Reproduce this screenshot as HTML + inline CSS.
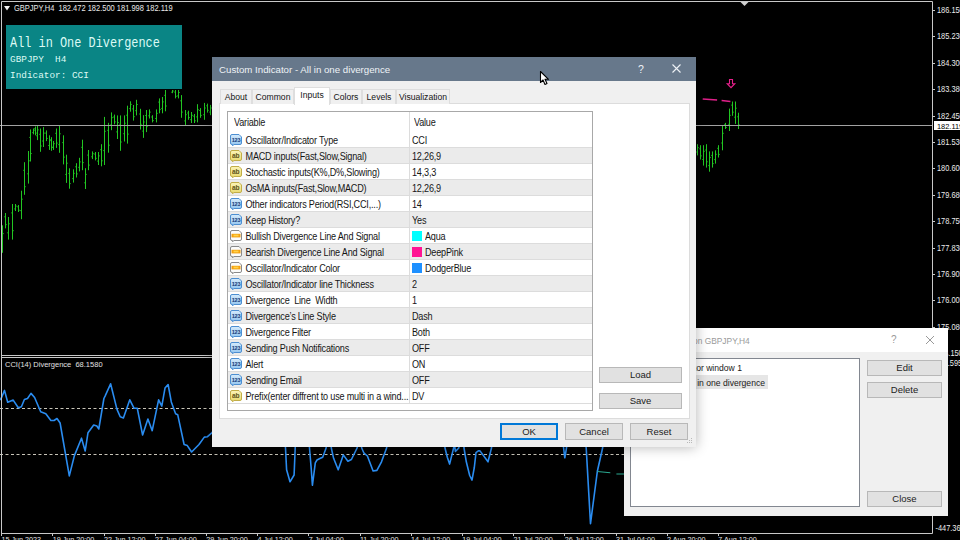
<!DOCTYPE html>
<html><head><meta charset="utf-8">
<style>
*{margin:0;padding:0;box-sizing:border-box}
html,body{width:960px;height:540px;overflow:hidden;background:#000;font-family:"Liberation Sans",sans-serif}
.abs{position:absolute}
.al{position:absolute;left:937px;font-size:7.4px;color:#ececec;white-space:nowrap;line-height:11px;transform:scaleY(1.12)}
.tk{position:absolute;left:932px;width:3px;height:1px;background:#c8c8c8}
.bt{position:absolute;top:533px;width:1px;height:3px;background:#c8c8c8}
.bl{position:absolute;top:534px;font-size:7.2px;color:#e6e6e6;white-space:nowrap;line-height:11px}
#teal{position:absolute;left:6px;top:25px;width:176px;height:64px;background:#0a8585}
.mono{font-family:"Liberation Mono",monospace;color:#dcfaf4;white-space:pre;position:absolute;left:4px;transform-origin:0 0}
#dlg{position:absolute;left:212px;top:57px;width:484px;height:390px;background:#f0f0f0;box-shadow:0 0 12px rgba(0,0,0,0.3)}
#tb{position:absolute;left:0;top:0;width:484px;height:24px;background:#67788b}
#tbt{position:absolute;left:7px;top:6.5px;font-size:9.7px;color:#eef2f6;white-space:nowrap;line-height:12px}
.tab{position:absolute;top:32px;height:15px;border:1px solid #dedede;border-bottom:none;background:#f0f0f0;font-size:8.6px;color:#161616;line-height:14px;text-align:center;white-space:nowrap}
.tab span{display:inline-block;transform:scaleY(1.12)}
#panel{position:absolute;left:7px;top:46px;width:471px;height:316px;background:#fff;border:1px solid #dcdcdc}
#lv{position:absolute;left:15px;top:54px;width:366px;height:300px;background:#fff;border:1px solid #a8a8a8;overflow:hidden}
.row{position:absolute;left:0;width:364px;height:16px;border-top:1px solid #dcdcdc}
.ic{position:absolute;left:1px;top:1px;width:14px;height:13px}
.ic svg{display:block}
.vn{position:absolute;left:17.5px;top:2.8px;font-size:9.1px;letter-spacing:-0.2px;color:#161616;white-space:nowrap;line-height:13px;transform:scaleY(1.12)}
.vv{position:absolute;left:184px;top:2.8px;font-size:9.1px;letter-spacing:-0.2px;color:#161616;white-space:nowrap;line-height:13px;transform:scaleY(1.12)}
.sw{position:absolute;left:184px;top:3px;width:10px;height:10px}
#hdr{position:absolute;left:0;top:0;width:364px;height:20px}
#coldiv{position:absolute;left:181px;top:0;width:1px;height:291px;background:#dcdcdc}
.btn{position:absolute;background:#e1e1e1;border:1px solid #b8b8b8;font-size:9.5px;color:#222;text-align:center;white-space:nowrap}
#dlg2{position:absolute;left:624px;top:328px;width:324px;height:188px;background:#f0f0f0}
#tb2{position:absolute;left:0;top:0;width:324px;height:24px;background:#fff}
</style></head><body>
<svg width="960" height="540" style="position:absolute;left:0;top:0">
<path d="M2.5 225.3V252.8M1.3 244.6H2.5M2.5 233.6H3.7M5.5 213.0V228.4M4.3 216.8H5.5M5.5 224.6H6.7M8.5 217.0V239.6M7.3 232.8H8.5M8.5 223.8H9.7M12.5 204.0V239.6M11.3 212.9H12.5M12.5 230.7H13.7M15.5 204.0V211.0M14.3 208.9H15.5M15.5 206.1H16.7M18.5 205.0V212.0M17.3 206.8H18.5M18.5 210.2H19.7M21.5 190.7V219.2M20.3 210.6H21.5M21.5 199.2H22.7M24.5 162.2V194.8M23.3 170.3H24.5M24.5 186.7H25.7M28.5 151.0V183.6M27.3 173.8H28.5M28.5 160.8H29.7M30.5 129.4V161.5M29.3 137.4H30.5M30.5 153.5H31.7M33.5 128.5V134.3M32.3 132.6H33.5M33.5 130.2H34.7M35.5 126.5V135.3M34.3 128.7H35.5M35.5 133.1H36.7M37.5 125.6V140.1M36.3 135.8H37.5M37.5 129.9H38.7M40.5 128.5V151.8M39.3 134.3H40.5M40.5 146.0H41.7M43.5 127.1V147.0M42.3 141.0H43.5M43.5 133.1H44.7M46.5 130.4V141.1M45.3 133.1H46.5M46.5 138.4H47.7M49.5 135.3V149.9M48.3 145.5H49.5M49.5 139.7H50.7M51.5 137.2V150.8M50.3 140.6H51.5M51.5 147.4H52.7M53.5 141.0V149.9M52.3 147.2H53.5M53.5 143.7H54.7M56.5 128.5V147.9M55.3 133.3H56.5M56.5 143.1H57.7M59.5 125.6V152.8M58.3 144.6H59.5M59.5 133.8H60.7M63.5 135.3V164.4M62.3 142.6H63.5M63.5 157.1H64.7M66.5 154.7V182.9M65.3 174.4H66.5M66.5 163.2H67.7M69.5 168.3V188.7M68.3 173.4H69.5M69.5 183.6H70.7M73.5 169.3V182.6M72.3 178.6H73.5M73.5 173.3H74.7M76.5 163.2V177.5M75.3 166.8H76.5M76.5 173.9H77.7M79.5 157.8V171.4M78.3 167.3H79.5M79.5 161.9H80.7M82.5 139.7V170.2M81.3 147.3H82.5M82.5 162.6H83.7M85.5 168.2V189.0M84.3 182.8H85.5M85.5 174.4H86.7M88.5 150.0V170.2M87.3 155.1H88.5M88.5 165.1H89.7M92.5 151.4V159.1M91.3 156.8H92.5M92.5 153.7H93.7M95.5 152.0V160.4M94.3 154.1H95.5M95.5 158.3H96.7M98.5 152.0V165.0M97.3 161.1H98.5M98.5 155.9H99.7M101.5 144.2V166.3M100.3 149.7H101.5M101.5 160.8H102.7M104.5 116.9V165.0M103.3 150.6H104.5M104.5 131.3H105.7M108.5 122.8V152.7M107.3 130.3H108.5M108.5 145.2H109.7M111.5 112.4V130.2M110.3 124.9H111.5M111.5 117.7H112.7M114.5 114.6V124.3M113.3 117.0H114.5M114.5 121.9H115.7M117.5 115.4V139.0M116.3 131.9H117.5M117.5 122.5H118.7M120.5 115.4V150.8M119.3 124.2H120.5M120.5 142.0H121.7M124.5 115.4V141.5M123.3 133.7H124.5M124.5 123.2H125.7M127.5 105.7V143.6M126.3 115.2H127.5M127.5 134.1H128.7M130.5 101.3V111.7M129.3 108.6H130.5M130.5 104.4H131.7M133.5 105.0V120.6M132.3 108.9H133.5M133.5 116.7H134.7M136.5 99.8V115.4M135.3 110.7H136.5M136.5 104.5H137.7M140.5 108.8V129.5M139.3 114.0H140.5M140.5 124.3H141.7M143.5 115.2V137.9M142.3 131.1H143.5M143.5 122.0H144.7M146.5 110.0V132.1M145.3 115.5H146.5M146.5 126.6H147.7M149.5 109.4V118.5M148.3 115.8H149.5M149.5 112.1H150.7M152.5 115.2V122.4M151.3 117.0H152.5M152.5 120.6H153.7M156.5 109.4V122.4M155.3 118.5H156.5M156.5 113.3H157.7M159.5 98.4V113.3M158.3 102.1H159.5M159.5 109.6H160.7M162.5 97.0V113.3M161.3 108.4H162.5M162.5 101.9H163.7M165.5 90.0V111.3M164.3 95.3H165.5M165.5 106.0H166.7M172.5 90.0V93.2M171.3 92.2H172.5M172.5 91.0H173.7M175.5 90.0V98.4M174.3 92.1H175.5M175.5 96.3H176.7M178.5 90.0V98.4M177.3 95.9H178.5M178.5 92.5H179.7M181.5 95.1V117.8M180.3 100.8H181.5M181.5 112.1H182.7M185.5 110.0V125.6M184.3 120.9H185.5M185.5 114.7H186.7M188.5 110.7V119.8M187.3 113.0H188.5M188.5 117.5H189.7M191.5 112.0V123.0M190.3 119.7H191.5M191.5 115.3H192.7M194.5 114.0V123.0M193.3 116.2H194.5M194.5 120.8H195.7M197.5 104.2V122.4M196.3 116.9H197.5M197.5 109.7H198.7M200.5 108.1V117.8M199.3 110.5H200.5M200.5 115.4H201.7M204.5 102.9V119.8M203.3 114.7H204.5M204.5 108.0H205.7M207.5 103.6V112.6M206.3 105.8H207.5M207.5 110.3H208.7M210.5 104.9V115.2M209.3 112.1H210.5M210.5 108.0H211.7M213.5 103.0V114.0M212.3 105.8H213.5M213.5 111.2H214.7M697.5 144.2V155.4M696.3 152.0H697.5M697.5 147.6H698.7M700.5 145.2V159.5M699.3 148.8H700.5M700.5 155.9H701.7M703.5 145.2V165.6M702.3 159.5H703.5M703.5 151.3H704.7M706.5 144.2V167.6M705.3 150.0H706.5M706.5 161.8H707.7M709.5 151.4V171.7M708.3 165.6H709.5M709.5 157.5H710.7M712.5 151.4V167.6M711.3 155.4H712.5M712.5 163.6H713.7M715.5 150.3V163.6M714.3 159.6H715.5M715.5 154.3H716.7M718.5 145.2V157.5M717.3 148.3H718.5M718.5 154.4H719.7M722.5 126.0V150.3M721.3 143.0H722.5M722.5 133.3H723.7M725.5 122.9V129.0M724.3 124.4H725.5M725.5 127.5H726.7M729.5 108.6V131.0M728.3 124.3H729.5M729.5 115.3H730.7M732.5 101.5V115.8M731.3 105.1H732.5M732.5 112.2H733.7M735.5 101.5V123.9M734.3 117.2H735.5M735.5 108.2H736.7M738.5 112.7V129.0M737.3 116.8H738.5M738.5 124.9H739.7" stroke="#22c622" stroke-width="1" fill="none"/>
<path d="M0 125.5H932" stroke="#a2a2a2" stroke-width="1"/>
<path d="M0 408.5H932M0 454.5H932" stroke="#c8c4b8" stroke-width="1.2" stroke-dasharray="3 2.5"/>
<path d="M0.0 400.0 L1.6 397.5 L4.5 390.4 L7.7 402.2 L13.2 400.1 L18.3 407.7 L21.4 406.7 L24.4 399.5 L27.5 398.5 L31.0 393.4 L34.6 397.5 L40.7 411.8 L45.8 413.8 L50.9 420.5 L54.0 420.5 L57.0 418.5 L60.1 423.0 L69.3 475.9 L74.4 455.6 L81.5 438.2 L85.2 451.0 L88.0 432.7 L93.7 425.0 L96.8 426.0 L98.8 429.0 L103.9 398.5 L105.3 395.6 L110.6 383.8 L117.0 409.4 L120.2 416.8 L123.4 417.9 L129.8 399.8 L134.1 408.3 L137.3 408.3 L142.6 435.0 L147.9 419.0 L152.2 430.7 L158.6 399.8 L161.8 406.2 L165.0 388.1 L168.1 384.5 L171.3 401.9 L175.6 413.7 L177.7 414.7 L184.1 444.5 L187.3 445.6 L191.6 452.0 L199.0 444.5 L204.3 437.1 L207.5 436.7 L211.8 432.8 L216.0 428.0 L284.0 425.0 L285.5 448.0 L286.6 469.8 L290.0 481.8 L294.1 475.0 L295.2 448.0 L297.0 425.0 L308.0 425.0 L309.5 448.0 L311.3 469.8 L312.4 485.3 L315.3 462.9 L317.0 460.0 L320.4 458.3 L322.7 457.2 L326.1 448.0 L328.0 430.0 L330.0 430.0 L331.3 448.0 L333.6 458.3 L338.2 469.8 L343.3 454.9 L347.9 461.2 L351.4 459.5 L357.1 448.0 L359.0 435.0 L360.0 435.0 L361.7 448.0 L364.0 453.2 L367.4 456.0 L373.1 471.0 L376.9 470.4 L381.5 461.8 L386.6 448.0 L390.0 425.0 L443.0 425.0 L445.0 448.0 L447.3 457.2 L449.6 464.1 L451.9 454.9 L453.6 448.0 L454.5 444.0 L455.4 451.5 L458.8 448.0 L460.0 440.0 L463.0 440.0 L464.0 448.0 L466.3 461.8 L469.7 475.5 L472.0 480.1 L474.3 467.5 L476.0 452.6 L478.3 450.9 L480.0 450.9 L488.0 461.8 L491.5 448.0 L494.0 425.0 L561.0 425.0 L563.6 448.0 L564.8 457.8 L566.5 448.0 L569.0 430.0 L584.0 430.0 L586.2 448.0 L590.5 523.6 L597.4 471.0 L602.6 448.0 L606.0 425.0 L640.0 420.0" stroke="#2a8cf0" stroke-width="1.6" fill="none" stroke-linejoin="round"/>
<path d="M597.4 471.5L610.3 472.8M616.4 474H624" stroke="#2aa890" stroke-width="1.1"/>
<path d="M702.7 98.9L717.1 99.9M721.6 100.4L730.4 101.4" stroke="#e0208a" stroke-width="1.5"/>
<path d="M729.5 79.5h3v4.2h2.3l-3.8 4l-3.8-4h2.3z" stroke="#e8208c" stroke-width="1.1" fill="none"/>
<path d="M1.5 1.5H932.5V533.5H1.5Z" stroke="#c8c8c8" stroke-width="1" fill="none"/>
<path d="M1 355.5H932M1 357.5H932" stroke="#c8c8c8" stroke-width="1"/>
<path d="M740.5 2H748.5L744.5 6Z" fill="#d0d0d0"/>
</svg>
<svg class="abs" style="left:4px;top:6px" width="6" height="5"><path d="M0 0H6L3 4.5Z" fill="#f0f0f0"/></svg>
<div class="abs" style="left:14px;top:3px;font-size:7.5px;color:#e8e8e8;white-space:nowrap;line-height:11px;transform:scaleY(1.1)">GBPJPY,H4&nbsp; 182.472 182.500 181.998 182.119</div>
<div class="abs" style="left:5px;top:359px;font-size:7.5px;color:#e0e0e0;white-space:nowrap;line-height:11px">CCI(14) Divergence&nbsp; 68.1580</div>
<div class="al" style="top:5.0px">186.150</div><div class="tk" style="top:10px"></div><div class="al" style="top:31.4px">185.230</div><div class="tk" style="top:36px"></div><div class="al" style="top:57.8px">184.300</div><div class="tk" style="top:63px"></div><div class="al" style="top:84.2px">183.380</div><div class="tk" style="top:89px"></div><div class="al" style="top:110.6px">182.450</div><div class="tk" style="top:116px"></div><div class="al" style="top:137.0px">181.530</div><div class="tk" style="top:142px"></div><div class="al" style="top:163.4px">180.600</div><div class="tk" style="top:168px"></div><div class="al" style="top:189.8px">179.680</div><div class="tk" style="top:195px"></div><div class="al" style="top:216.2px">178.750</div><div class="tk" style="top:221px"></div><div class="al" style="top:242.6px">177.830</div><div class="tk" style="top:248px"></div><div class="al" style="top:269.0px">176.905</div><div class="tk" style="top:274px"></div><div class="al" style="top:295.4px">176.005</div><div class="tk" style="top:300px"></div><div class="al" style="top:321.8px">175.080</div><div class="tk" style="top:327px"></div><div class="al" style="top:348.2px;left:936px">174.150</div><div class="al" style="top:357.5px;left:936px">211.595</div><div class="al" style="top:522.5px;left:935.5px">-447.36</div>
<div class="abs" style="left:934px;top:121px;width:26px;height:9px;background:#fff"></div>
<div class="abs" style="left:937px;top:120.5px;font-size:7.4px;color:#000;white-space:nowrap;line-height:11px">182.119</div>
<div class="bt" style="left:1px"></div><div class="bl" style="left:1.5px">15 Jun 2023</div><div class="bt" style="left:52px"></div><div class="bl" style="left:52.7px">19 Jun 20:00</div><div class="bt" style="left:104px"></div><div class="bl" style="left:103.9px">22 Jun 12:00</div><div class="bt" style="left:155px"></div><div class="bl" style="left:155.1px">27 Jun 04:00</div><div class="bt" style="left:206px"></div><div class="bl" style="left:206.3px">29 Jun 20:00</div><div class="bt" style="left:257px"></div><div class="bl" style="left:257.5px">4 Jul 12:00</div><div class="bt" style="left:308px"></div><div class="bl" style="left:308.7px">7 Jul 04:00</div><div class="bt" style="left:360px"></div><div class="bl" style="left:359.9px">11 Jul 20:00</div><div class="bt" style="left:411px"></div><div class="bl" style="left:411.1px">14 Jul 12:00</div><div class="bt" style="left:462px"></div><div class="bl" style="left:462.3px">19 Jul 04:00</div><div class="bt" style="left:513px"></div><div class="bl" style="left:513.5px">21 Jul 20:00</div><div class="bt" style="left:564px"></div><div class="bl" style="left:564.7px">26 Jul 12:00</div><div class="bt" style="left:616px"></div><div class="bl" style="left:615.9px">31 Jul 04:00</div><div class="bt" style="left:667px"></div><div class="bl" style="left:667.1px">2 Aug 20:00</div><div class="bt" style="left:718px"></div><div class="bl" style="left:718.3px">7 Aug 12:00</div>
<div id="teal">
 <div class="mono" style="top:9.5px;font-size:14.6px;line-height:17px;transform:scaleX(0.815)">All in One Divergence</div>
 <div class="mono" style="top:29px;font-size:9.4px;line-height:11px">GBPJPY  H4</div>
 <div class="mono" style="top:45px;font-size:9.4px;line-height:11px">Indicator: CCI</div>
</div>

<div id="dlg2">
 <div id="tb2"><div class="abs" style="left:30.4px;top:6.5px;font-size:8.4px;transform:scaleY(1.1);color:#9a9a9a;white-space:nowrap;line-height:12px">Indicators on GBPJPY,H4</div>
  <div class="abs" style="left:267px;top:6px;font-size:10px;color:#999;line-height:12px">?</div>
  <svg class="abs" style="left:301px;top:7px" width="10" height="10"><path d="M1 1L9 9M9 1L1 9" stroke="#999" stroke-width="1"/></svg>
 </div>
 <div class="abs" style="left:6px;top:30px;width:230px;height:149px;background:#fff;border:1px solid #828790">
  <div class="abs" style="right:117px;top:3px;font-size:8.6px;color:#1a1a1a;white-space:nowrap;line-height:13px">Indicator window 1</div>
  <div class="abs" style="left:30px;top:16px;width:107px;height:14px;background:#e6e6e6"></div>
  <div class="abs" style="right:94px;top:17.5px;font-size:8.6px;color:#1a1a1a;white-space:nowrap;line-height:13px">All in one divergence</div>
 </div>
 <div class="btn" style="left:243px;top:32px;width:75px;height:16px;line-height:14px">Edit</div>
 <div class="btn" style="left:243px;top:54px;width:75px;height:16px;line-height:14px">Delete</div>
 <div class="btn" style="left:243px;top:163px;width:75px;height:16px;line-height:14px">Close</div>
</div>

<div id="dlg">
 <div id="tb"><div id="tbt">Custom Indicator - All in one divergence</div>
  <div class="abs" style="left:426px;top:6px;font-size:10.5px;color:#eef2f6;line-height:12px">?</div>
  <svg class="abs" style="left:460px;top:7px" width="10" height="10"><path d="M0.5 0.5L8.5 8.5M8.5 0.5L0.5 8.5" stroke="#eef2f6" stroke-width="1.1"/></svg>
 </div>
 <div id="panel"></div>
 <div class="tab" style="left:8px;width:32px"><span>About</span></div>
 <div class="tab" style="left:40px;width:42px"><span>Common</span></div>
 <div class="tab" style="left:82px;top:30px;height:18px;width:36px;background:#fff;line-height:15px"><span>Inputs</span></div>
 <div class="tab" style="left:118px;width:32px"><span>Colors</span></div>
 <div class="tab" style="left:150px;width:34px"><span>Levels</span></div>
 <div class="tab" style="left:184px;width:54px"><span>Visualization</span></div>
 <div id="lv">
  <div id="hdr"><span class="vn" style="left:6px;top:5px">Variable</span><span class="vv" style="left:186px;top:5px">Value</span></div>
  <div class="row" style="top:19px;background:#ffffff;border-top-color:transparent"><span class="ic"><svg width="14" height="13" viewBox="0 0 14 13"><defs><linearGradient id="gn" x1="0" y1="0" x2="0" y2="1"><stop offset="0" stop-color="#d6ebfb"/><stop offset="1" stop-color="#8fc3ef"/></linearGradient></defs><path d="M1.5 3Q1.5 1.5 3 1.5H10L12.5 4V10Q12.5 11.5 11 11.5H5L3.5 12.8V11.5H3Q1.5 11.5 1.5 10Z" fill="url(#gn)" stroke="#4d8fd2" stroke-width="1"/><text x="7" y="9.2" font-size="5.6" font-family="Liberation Sans" font-weight="bold" fill="#173c78" text-anchor="middle" letter-spacing="-0.3">123</text></svg></span><span class="vn">Oscillator/Indicator Type</span><span class="vv" >CCI</span></div><div class="row" style="top:35px;background:#ebebeb"><span class="ic"><svg width="14" height="13" viewBox="0 0 14 13"><defs><linearGradient id="gs" x1="0" y1="0" x2="0" y2="1"><stop offset="0" stop-color="#fbf4b8"/><stop offset="1" stop-color="#e8d86a"/></linearGradient></defs><path d="M1.5 3Q1.5 1.5 3 1.5H10L12.5 4V10Q12.5 11.5 11 11.5H5L3.5 12.8V11.5H3Q1.5 11.5 1.5 10Z" fill="url(#gs)" stroke="#c2ae48" stroke-width="1"/><text x="6.6" y="9.4" font-size="6.6" font-family="Liberation Sans" font-weight="bold" fill="#5e5418" text-anchor="middle" letter-spacing="-0.2">ab</text></svg></span><span class="vn">MACD inputs(Fast,Slow,Signal)</span><span class="vv" >12,26,9</span></div><div class="row" style="top:51px;background:#ffffff"><span class="ic"><svg width="14" height="13" viewBox="0 0 14 13"><defs><linearGradient id="gs" x1="0" y1="0" x2="0" y2="1"><stop offset="0" stop-color="#fbf4b8"/><stop offset="1" stop-color="#e8d86a"/></linearGradient></defs><path d="M1.5 3Q1.5 1.5 3 1.5H10L12.5 4V10Q12.5 11.5 11 11.5H5L3.5 12.8V11.5H3Q1.5 11.5 1.5 10Z" fill="url(#gs)" stroke="#c2ae48" stroke-width="1"/><text x="6.6" y="9.4" font-size="6.6" font-family="Liberation Sans" font-weight="bold" fill="#5e5418" text-anchor="middle" letter-spacing="-0.2">ab</text></svg></span><span class="vn">Stochastic inputs(K%,D%,Slowing)</span><span class="vv" >14,3,3</span></div><div class="row" style="top:67px;background:#ebebeb"><span class="ic"><svg width="14" height="13" viewBox="0 0 14 13"><defs><linearGradient id="gs" x1="0" y1="0" x2="0" y2="1"><stop offset="0" stop-color="#fbf4b8"/><stop offset="1" stop-color="#e8d86a"/></linearGradient></defs><path d="M1.5 3Q1.5 1.5 3 1.5H10L12.5 4V10Q12.5 11.5 11 11.5H5L3.5 12.8V11.5H3Q1.5 11.5 1.5 10Z" fill="url(#gs)" stroke="#c2ae48" stroke-width="1"/><text x="6.6" y="9.4" font-size="6.6" font-family="Liberation Sans" font-weight="bold" fill="#5e5418" text-anchor="middle" letter-spacing="-0.2">ab</text></svg></span><span class="vn">OsMA inputs(Fast,Slow,MACD)</span><span class="vv" >12,26,9</span></div><div class="row" style="top:83px;background:#ffffff"><span class="ic"><svg width="14" height="13" viewBox="0 0 14 13"><defs><linearGradient id="gn" x1="0" y1="0" x2="0" y2="1"><stop offset="0" stop-color="#d6ebfb"/><stop offset="1" stop-color="#8fc3ef"/></linearGradient></defs><path d="M1.5 3Q1.5 1.5 3 1.5H10L12.5 4V10Q12.5 11.5 11 11.5H5L3.5 12.8V11.5H3Q1.5 11.5 1.5 10Z" fill="url(#gn)" stroke="#4d8fd2" stroke-width="1"/><text x="7" y="9.2" font-size="5.6" font-family="Liberation Sans" font-weight="bold" fill="#173c78" text-anchor="middle" letter-spacing="-0.3">123</text></svg></span><span class="vn">Other indicators Period(RSI,CCI,...)</span><span class="vv" >14</span></div><div class="row" style="top:99px;background:#ebebeb"><span class="ic"><svg width="14" height="13" viewBox="0 0 14 13"><defs><linearGradient id="gn" x1="0" y1="0" x2="0" y2="1"><stop offset="0" stop-color="#d6ebfb"/><stop offset="1" stop-color="#8fc3ef"/></linearGradient></defs><path d="M1.5 3Q1.5 1.5 3 1.5H10L12.5 4V10Q12.5 11.5 11 11.5H5L3.5 12.8V11.5H3Q1.5 11.5 1.5 10Z" fill="url(#gn)" stroke="#4d8fd2" stroke-width="1"/><text x="7" y="9.2" font-size="5.6" font-family="Liberation Sans" font-weight="bold" fill="#173c78" text-anchor="middle" letter-spacing="-0.3">123</text></svg></span><span class="vn">Keep History?</span><span class="vv" >Yes</span></div><div class="row" style="top:115px;background:#ffffff"><span class="ic"><svg width="14" height="13" viewBox="0 0 14 13"><path d="M1.5 3Q1.5 1.5 3 1.5H10L12.5 4V10Q12.5 11.5 11 11.5H5L3.5 12.8V11.5H3Q1.5 11.5 1.5 10Z" fill="#fbfbfb" stroke="#8a8a8a" stroke-width="1"/><rect x="2.5" y="4.8" width="9" height="3.6" fill="#f4a010"/><rect x="4.5" y="5.6" width="5" height="1.8" fill="#ffd24a"/></svg></span><span class="vn">Bullish Divergence Line And Signal</span><span class="sw" style="background:#00ffff"></span><span class="vv" style="left:197px">Aqua</span></div><div class="row" style="top:131px;background:#ebebeb"><span class="ic"><svg width="14" height="13" viewBox="0 0 14 13"><path d="M1.5 3Q1.5 1.5 3 1.5H10L12.5 4V10Q12.5 11.5 11 11.5H5L3.5 12.8V11.5H3Q1.5 11.5 1.5 10Z" fill="#fbfbfb" stroke="#8a8a8a" stroke-width="1"/><rect x="2.5" y="4.8" width="9" height="3.6" fill="#f4a010"/><rect x="4.5" y="5.6" width="5" height="1.8" fill="#ffd24a"/></svg></span><span class="vn">Bearish Divergence Line And Signal</span><span class="sw" style="background:#ff1493"></span><span class="vv" style="left:197px">DeepPink</span></div><div class="row" style="top:147px;background:#ffffff"><span class="ic"><svg width="14" height="13" viewBox="0 0 14 13"><path d="M1.5 3Q1.5 1.5 3 1.5H10L12.5 4V10Q12.5 11.5 11 11.5H5L3.5 12.8V11.5H3Q1.5 11.5 1.5 10Z" fill="#fbfbfb" stroke="#8a8a8a" stroke-width="1"/><rect x="2.5" y="4.8" width="9" height="3.6" fill="#f4a010"/><rect x="4.5" y="5.6" width="5" height="1.8" fill="#ffd24a"/></svg></span><span class="vn">Oscillator/Indicator Color</span><span class="sw" style="background:#1e90ff"></span><span class="vv" style="left:197px">DodgerBlue</span></div><div class="row" style="top:163px;background:#ebebeb"><span class="ic"><svg width="14" height="13" viewBox="0 0 14 13"><defs><linearGradient id="gn" x1="0" y1="0" x2="0" y2="1"><stop offset="0" stop-color="#d6ebfb"/><stop offset="1" stop-color="#8fc3ef"/></linearGradient></defs><path d="M1.5 3Q1.5 1.5 3 1.5H10L12.5 4V10Q12.5 11.5 11 11.5H5L3.5 12.8V11.5H3Q1.5 11.5 1.5 10Z" fill="url(#gn)" stroke="#4d8fd2" stroke-width="1"/><text x="7" y="9.2" font-size="5.6" font-family="Liberation Sans" font-weight="bold" fill="#173c78" text-anchor="middle" letter-spacing="-0.3">123</text></svg></span><span class="vn">Oscillator/Indicator line Thickness</span><span class="vv" >2</span></div><div class="row" style="top:179px;background:#ffffff"><span class="ic"><svg width="14" height="13" viewBox="0 0 14 13"><defs><linearGradient id="gn" x1="0" y1="0" x2="0" y2="1"><stop offset="0" stop-color="#d6ebfb"/><stop offset="1" stop-color="#8fc3ef"/></linearGradient></defs><path d="M1.5 3Q1.5 1.5 3 1.5H10L12.5 4V10Q12.5 11.5 11 11.5H5L3.5 12.8V11.5H3Q1.5 11.5 1.5 10Z" fill="url(#gn)" stroke="#4d8fd2" stroke-width="1"/><text x="7" y="9.2" font-size="5.6" font-family="Liberation Sans" font-weight="bold" fill="#173c78" text-anchor="middle" letter-spacing="-0.3">123</text></svg></span><span class="vn">Divergence&nbsp; Line&nbsp; Width</span><span class="vv" >1</span></div><div class="row" style="top:195px;background:#ebebeb"><span class="ic"><svg width="14" height="13" viewBox="0 0 14 13"><defs><linearGradient id="gn" x1="0" y1="0" x2="0" y2="1"><stop offset="0" stop-color="#d6ebfb"/><stop offset="1" stop-color="#8fc3ef"/></linearGradient></defs><path d="M1.5 3Q1.5 1.5 3 1.5H10L12.5 4V10Q12.5 11.5 11 11.5H5L3.5 12.8V11.5H3Q1.5 11.5 1.5 10Z" fill="url(#gn)" stroke="#4d8fd2" stroke-width="1"/><text x="7" y="9.2" font-size="5.6" font-family="Liberation Sans" font-weight="bold" fill="#173c78" text-anchor="middle" letter-spacing="-0.3">123</text></svg></span><span class="vn">Divergence’s Line Style</span><span class="vv" >Dash</span></div><div class="row" style="top:211px;background:#ffffff"><span class="ic"><svg width="14" height="13" viewBox="0 0 14 13"><defs><linearGradient id="gn" x1="0" y1="0" x2="0" y2="1"><stop offset="0" stop-color="#d6ebfb"/><stop offset="1" stop-color="#8fc3ef"/></linearGradient></defs><path d="M1.5 3Q1.5 1.5 3 1.5H10L12.5 4V10Q12.5 11.5 11 11.5H5L3.5 12.8V11.5H3Q1.5 11.5 1.5 10Z" fill="url(#gn)" stroke="#4d8fd2" stroke-width="1"/><text x="7" y="9.2" font-size="5.6" font-family="Liberation Sans" font-weight="bold" fill="#173c78" text-anchor="middle" letter-spacing="-0.3">123</text></svg></span><span class="vn">Divergence Filter</span><span class="vv" >Both</span></div><div class="row" style="top:227px;background:#ebebeb"><span class="ic"><svg width="14" height="13" viewBox="0 0 14 13"><defs><linearGradient id="gn" x1="0" y1="0" x2="0" y2="1"><stop offset="0" stop-color="#d6ebfb"/><stop offset="1" stop-color="#8fc3ef"/></linearGradient></defs><path d="M1.5 3Q1.5 1.5 3 1.5H10L12.5 4V10Q12.5 11.5 11 11.5H5L3.5 12.8V11.5H3Q1.5 11.5 1.5 10Z" fill="url(#gn)" stroke="#4d8fd2" stroke-width="1"/><text x="7" y="9.2" font-size="5.6" font-family="Liberation Sans" font-weight="bold" fill="#173c78" text-anchor="middle" letter-spacing="-0.3">123</text></svg></span><span class="vn">Sending Push Notifications</span><span class="vv" >OFF</span></div><div class="row" style="top:243px;background:#ffffff"><span class="ic"><svg width="14" height="13" viewBox="0 0 14 13"><defs><linearGradient id="gn" x1="0" y1="0" x2="0" y2="1"><stop offset="0" stop-color="#d6ebfb"/><stop offset="1" stop-color="#8fc3ef"/></linearGradient></defs><path d="M1.5 3Q1.5 1.5 3 1.5H10L12.5 4V10Q12.5 11.5 11 11.5H5L3.5 12.8V11.5H3Q1.5 11.5 1.5 10Z" fill="url(#gn)" stroke="#4d8fd2" stroke-width="1"/><text x="7" y="9.2" font-size="5.6" font-family="Liberation Sans" font-weight="bold" fill="#173c78" text-anchor="middle" letter-spacing="-0.3">123</text></svg></span><span class="vn">Alert</span><span class="vv" >ON</span></div><div class="row" style="top:259px;background:#ebebeb"><span class="ic"><svg width="14" height="13" viewBox="0 0 14 13"><defs><linearGradient id="gn" x1="0" y1="0" x2="0" y2="1"><stop offset="0" stop-color="#d6ebfb"/><stop offset="1" stop-color="#8fc3ef"/></linearGradient></defs><path d="M1.5 3Q1.5 1.5 3 1.5H10L12.5 4V10Q12.5 11.5 11 11.5H5L3.5 12.8V11.5H3Q1.5 11.5 1.5 10Z" fill="url(#gn)" stroke="#4d8fd2" stroke-width="1"/><text x="7" y="9.2" font-size="5.6" font-family="Liberation Sans" font-weight="bold" fill="#173c78" text-anchor="middle" letter-spacing="-0.3">123</text></svg></span><span class="vn">Sending Email</span><span class="vv" >OFF</span></div><div class="row" style="top:275px;background:#ffffff;height:17px;border-bottom:1px solid #dcdcdc"><span class="ic"><svg width="14" height="13" viewBox="0 0 14 13"><defs><linearGradient id="gs" x1="0" y1="0" x2="0" y2="1"><stop offset="0" stop-color="#fbf4b8"/><stop offset="1" stop-color="#e8d86a"/></linearGradient></defs><path d="M1.5 3Q1.5 1.5 3 1.5H10L12.5 4V10Q12.5 11.5 11 11.5H5L3.5 12.8V11.5H3Q1.5 11.5 1.5 10Z" fill="url(#gs)" stroke="#c2ae48" stroke-width="1"/><text x="6.6" y="9.4" font-size="6.6" font-family="Liberation Sans" font-weight="bold" fill="#5e5418" text-anchor="middle" letter-spacing="-0.2">ab</text></svg></span><span class="vn">Prefix(enter diffrent to use multi in a wind...</span><span class="vv" >DV</span></div>
  <div id="coldiv"></div>
 </div>
 <div class="btn" style="left:387px;top:310px;width:83px;height:16px;line-height:14px">Load</div>
 <div class="btn" style="left:387px;top:336px;width:83px;height:16px;line-height:14px">Save</div>
 <svg class="abs" style="left:474px;top:380px" width="8" height="8"><g fill="#b8b8b8"><rect x="5" y="1" width="1" height="1"/><rect x="3" y="3" width="1" height="1"/><rect x="5" y="3" width="1" height="1"/><rect x="1" y="5" width="1" height="1"/><rect x="3" y="5" width="1" height="1"/><rect x="5" y="5" width="1" height="1"/></g></svg>
 <div class="btn" style="left:288px;top:366px;width:58px;height:17px;line-height:13px;border:2px solid #0078d7">OK</div>
 <div class="btn" style="left:353px;top:366px;width:58px;height:17px;line-height:15px">Cancel</div>
 <div class="btn" style="left:418px;top:366px;width:58px;height:17px;line-height:15px">Reset</div>
</div>
<svg class="abs" style="left:539px;top:70px" width="12" height="16"><path d="M1.5 1.5V12.5L4 10L6 14.5L8 13.5L6 9.3H9.5Z" fill="#fff" stroke="#000" stroke-width="1.1" stroke-linejoin="round"/></svg>
</body></html>
